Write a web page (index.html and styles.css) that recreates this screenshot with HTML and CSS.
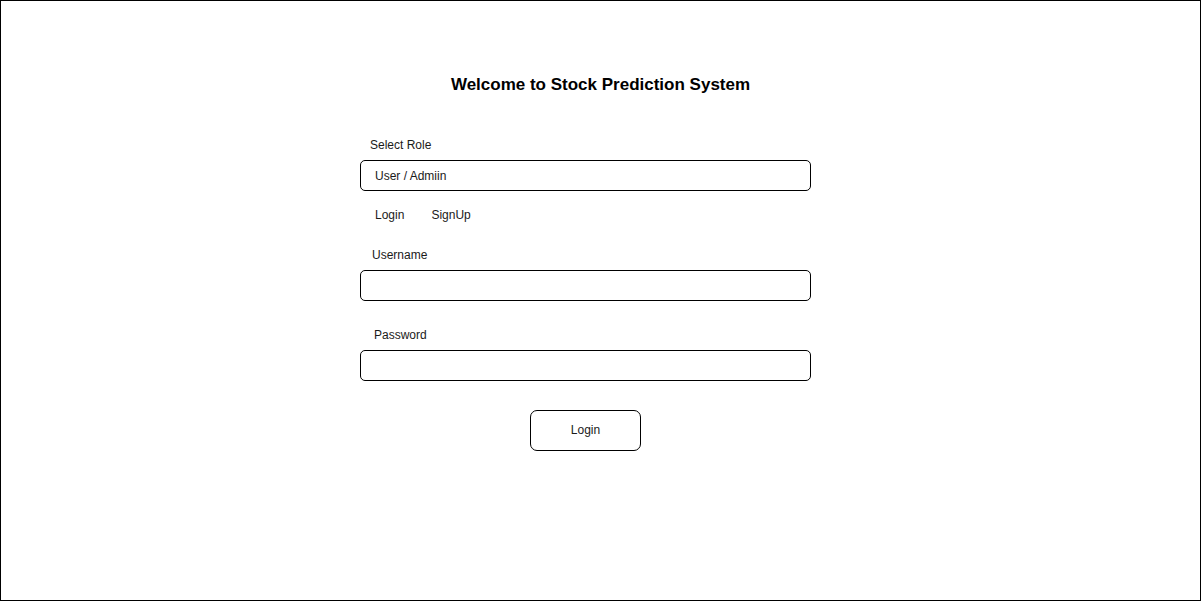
FILE: index.html
```html
<!DOCTYPE html>
<html>
<head>
<meta charset="utf-8">
<link rel="stylesheet" href="styles.css">
</head>
<body>
<div class="page">
  <h1 class="title">Welcome to Stock Prediction System</h1>
  <form class="form">
    <div class="label label-role">Select Role</div>
    <div class="box select-box"><span class="box-text">User / Admiin</span></div>
    <div class="tabs">
      <span class="tab tab-login">Login</span>
      <span class="tab tab-signup">SignUp</span>
    </div>
    <div class="label label-user">Username</div>
    <div class="box input-box"></div>
    <div class="label label-pass">Password</div>
    <div class="box input-box"></div>
    <div class="button-row">
      <div class="button">Login</div>
    </div>
  </form>
</div>
</body>
</html>
```
FILE: styles.css
```css
* { box-sizing: border-box; }
html, body { margin: 0; padding: 0; background: #fff; }
body { font-family: "Liberation Sans", Arial, sans-serif; color: #1a1a1a; }
.page {
  width: 1201px;
  height: 601px;
  border: 1px solid #000;
  padding-top: 74px;
}
.title {
  margin: 0;
  font-size: 17px;
  line-height: 20px;
  font-weight: bold;
  text-align: center;
  color: #000;
}
.form {
  width: 451px;
  margin: 43px 0 0 359px;
  display: flex;
  flex-direction: column;
}
.label, .tab, .box-text, .button {
  font-size: 12px;
  line-height: 14px;
}
.label-role { padding-left: 10px; }
.label-user { padding-left: 12px; margin-top: 26px; }
.label-pass { padding-left: 14px; margin-top: 27px; }
.box {
  margin-top: 8px;
  height: 31px;
  border: 1px solid #000;
  border-radius: 5px;
  display: flex;
  align-items: center;
}
.box-text { padding-left: 14px; }
.tabs {
  display: flex;
  margin-top: 17px;
  padding-left: 15px;
}
.tab-signup { margin-left: 27px; }
.button-row {
  display: flex;
  justify-content: center;
  margin-top: 29px;
}
.button {
  width: 111px;
  height: 41px;
  border: 1px solid #000;
  border-radius: 7px;
  display: flex;
  align-items: center;
  justify-content: center;
  padding-bottom: 2px;
}
```
